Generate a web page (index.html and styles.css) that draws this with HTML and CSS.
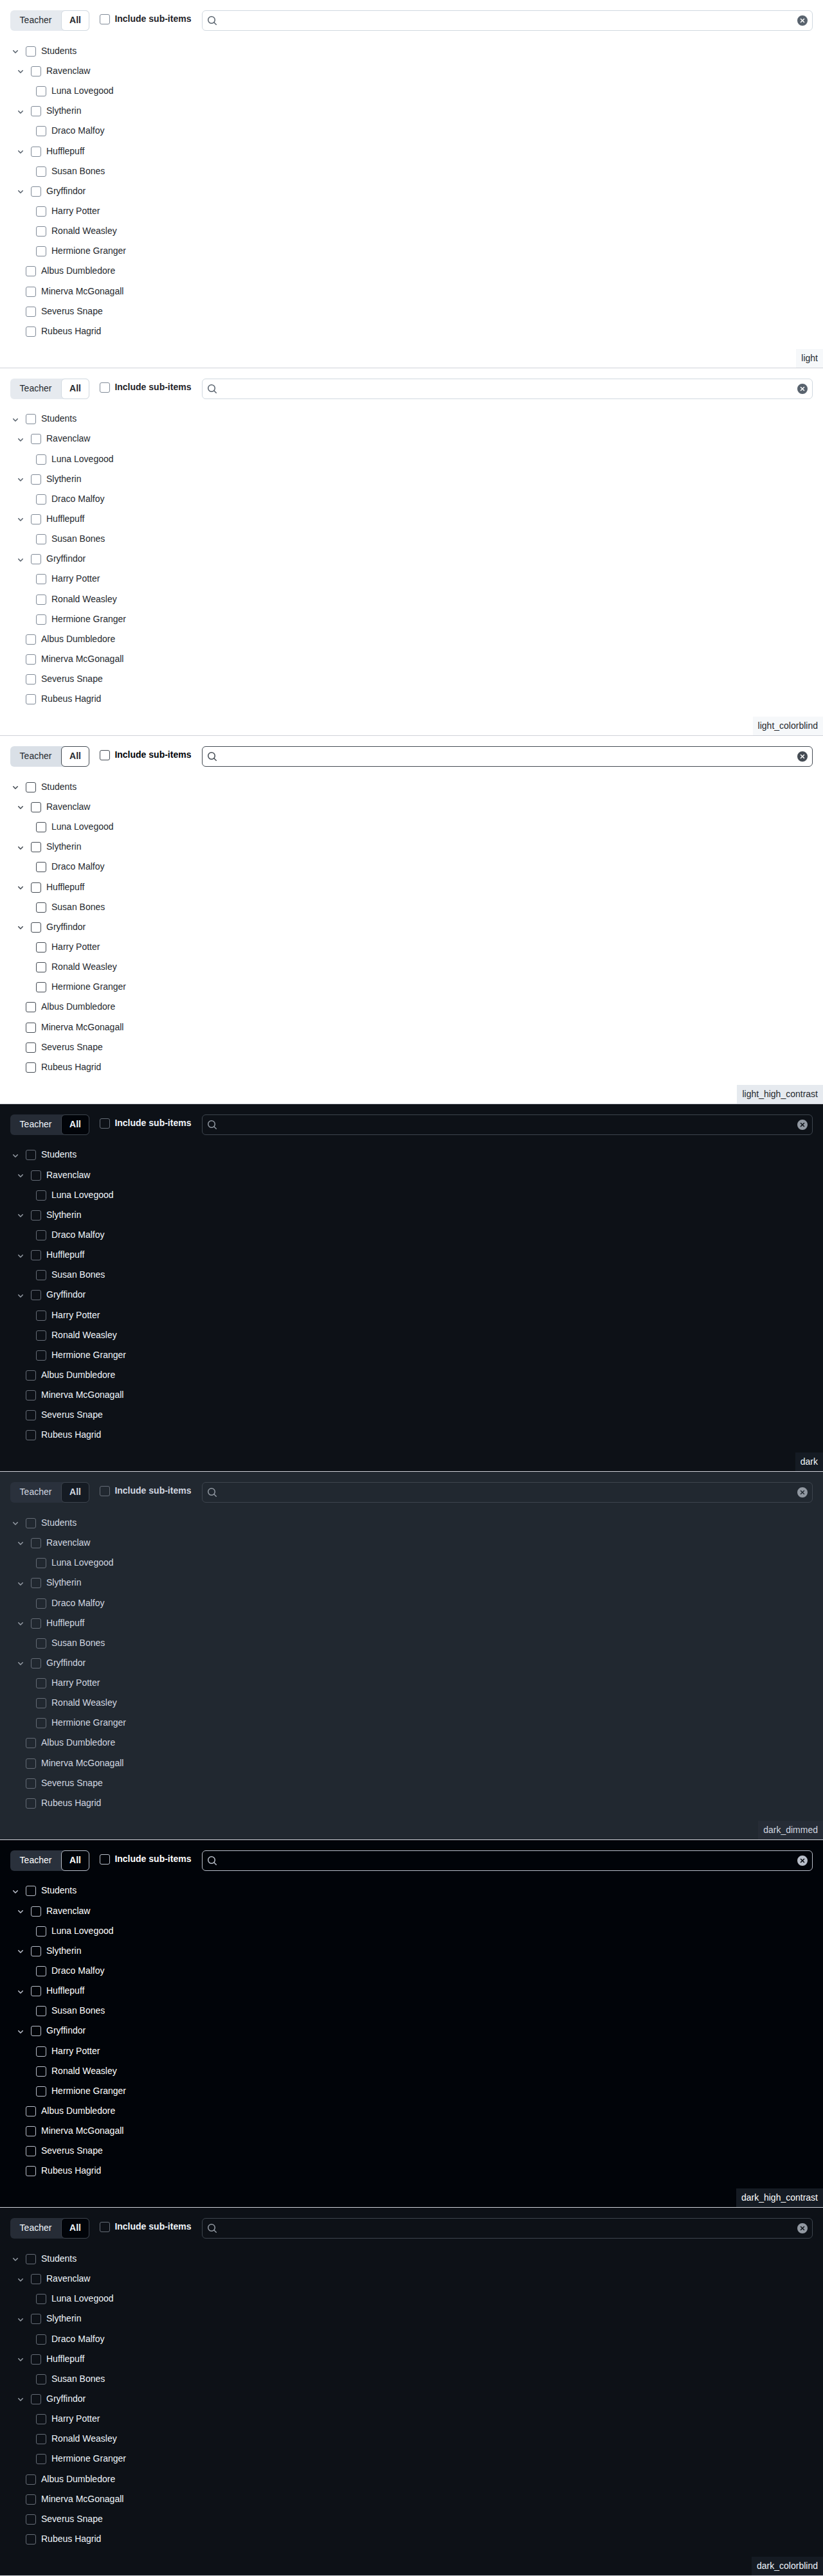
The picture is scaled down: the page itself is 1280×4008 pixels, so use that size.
FILE: index.html
```html
<!DOCTYPE html>
<html lang="en">
<head>
<meta charset="utf-8">
<title>Tree view themes</title>
<link rel="stylesheet" href="styles.css">
</head>
<body>
<main id="themes"></main>

<template id="panel">
  <section class="panel">
    <div class="toolbar">
      <div class="segmented">
        <button class="segment" type="button">Teacher</button>
        <button class="segment segment-selected" type="button">All</button>
      </div>
      <label class="include"><span class="checkbox"></span><span class="include-text">Include sub-items</span></label>
      <div class="search">
        <svg class="icon" width="16" height="16" viewBox="0 0 16 16"><path d="M10.68 11.74a6 6 0 0 1-7.922-8.982 6 6 0 0 1 8.982 7.922l3.04 3.04a.749.749 0 0 1-.326 1.275.749.749 0 0 1-.734-.215ZM11.5 7a4.499 4.499 0 1 0-8.997 0A4.499 4.499 0 0 0 11.5 7Z"/></svg>
        <svg class="icon" width="16" height="16" viewBox="0 0 16 16"><path d="M2.343 13.657A8 8 0 1 1 13.658 2.343 8 8 0 0 1 2.343 13.657ZM6.03 4.97a.751.751 0 0 0-1.042.018.751.751 0 0 0-.018 1.042L6.94 8 4.97 9.97a.749.749 0 0 0 .326 1.275.749.749 0 0 0 .734-.215L8 9.06l1.97 1.97a.749.749 0 0 0 1.275-.326.749.749 0 0 0-.215-.734L9.06 8l1.97-1.97a.749.749 0 0 0-.326-1.275.749.749 0 0 0-.734.215L8 6.94Z"/></svg>
      </div>
    </div>
    <ul class="tree"></ul>
    <span class="tag"></span>
  </section>
</template>

<template id="row">
  <li class="row">
    <span class="toggle"><svg class="icon" width="12" height="12" viewBox="0 0 12 12"><path d="M6 8.825c-.2 0-.4-.1-.5-.2l-3.3-3.3c-.3-.3-.3-.8 0-1.1.3-.3.8-.3 1.1 0l2.7 2.7 2.7-2.7c.3-.3.8-.3 1.1 0 .3.3.3.8 0 1.1l-3.2 3.2c-.2.2-.4.3-.6.3Z"/></svg></span>
    <span class="checkbox"></span>
    <span class="name"></span>
  </li>
</template>
<script src="app.js"></script>
</body>
</html>
```

FILE: app.js
```js
const themes = ["light", "light_colorblind", "light_high_contrast", "dark", "dark_dimmed", "dark_high_contrast", "dark_colorblind"];

// [name, depth, has children]
const people = [
  ["Students", 0, true],
  ["Ravenclaw", 1, true],
  ["Luna Lovegood", 2, false],
  ["Slytherin", 1, true],
  ["Draco Malfoy", 2, false],
  ["Hufflepuff", 1, true],
  ["Susan Bones", 2, false],
  ["Gryffindor", 1, true],
  ["Harry Potter", 2, false],
  ["Ronald Weasley", 2, false],
  ["Hermione Granger", 2, false],
  ["Albus Dumbledore", 0, false],
  ["Minerva McGonagall", 0, false],
  ["Severus Snape", 0, false],
  ["Rubeus Hagrid", 0, false]
];

const panelTemplate = document.getElementById("panel");
const rowTemplate = document.getElementById("row");

for (const theme of themes) {
  const panel = panelTemplate.content.cloneNode(true);
  panel.querySelector(".panel").classList.add(theme);
  panel.querySelector(".tag").textContent = theme;
  const tree = panel.querySelector(".tree");
  for (const [name, depth, open] of people) {
    const row = rowTemplate.content.cloneNode(true);
    row.querySelector(".row").classList.add("depth-" + depth);
    row.querySelector(".name").textContent = name;
    if (!open) row.querySelector(".toggle svg").remove();
    tree.append(row);
  }
  document.getElementById("themes").append(panel);
}
```

FILE: styles.css
```css
* { box-sizing: border-box; }

body {
  margin: 0;
  font: 14px/1.5 "Liberation Sans", Arial, sans-serif;
}

.panel {
  position: relative;
  height: 572.53125px;
  padding: 16px;
  border-bottom: 1px solid #d0d2d9;
  background: var(--bg);
  color: var(--fg);
}

.light, .light_colorblind {
  --bg: #fff; --fg: #25292e; --strong: #1f2328; --muted: #59636e;
  --border: #d1d9e0; --check: #818b98; --track: #e6eaef; --selected: #fff; --tag: #f6f8fa;
}
.light_high_contrast {
  --bg: #fff; --fg: #25292e; --strong: #010409; --muted: #454c54;
  --border: #454c54; --check: #454c54; --track: #dae0e7; --selected: #fff; --tag: #e6eaef;
}
.dark, .dark_colorblind {
  --bg: #0d1117; --fg: #f0f6fc; --strong: #f0f6fc; --muted: #9198a1;
  --border: #3d444d; --check: #656c76; --track: #262c36; --selected: #010409; --tag: #151b23;
}
.dark_dimmed {
  --bg: #212830; --fg: #d1d7e0; --strong: #d1d7e0; --muted: #9198a1;
  --border: #3d444d; --check: #656c76; --track: #2a313c; --selected: #151b23; --tag: #262c36;
}
.dark_high_contrast {
  --bg: #010409; --fg: #fff; --strong: #fff; --muted: #b7bdc8;
  --border: #b7bdc8; --check: #b7bdc8; --track: #2a313c; --selected: #010409; --tag: #151b23;
}

.icon { display: block; fill: var(--muted); }

.toolbar { display: flex; height: 32px; }

.segmented {
  display: flex;
  width: 123px;
  border-radius: 6px;
  background: var(--track);
}
.segment {
  width: 79px;
  padding: 0 0 0.8px;
  border: 1px solid transparent;
  background: none;
  color: var(--fg);
  font: inherit;
}
.segment-selected {
  width: 44px;
  border-color: var(--border);
  border-radius: 6px;
  background: var(--selected);
  font-weight: 700;
}

.include { display: flex; width: 159px; margin-left: 16px; padding-top: 6px; }
.include-text {
  margin: -2.8px 0 0 7.4px;
  color: var(--strong);
  font-weight: 700;
  white-space: nowrap;
}

.checkbox {
  flex: none;
  width: 16px;
  height: 16px;
  border: 1px solid var(--check);
  border-radius: 3px;
}

.search {
  display: flex;
  flex: 1;
  align-items: center;
  justify-content: space-between;
  padding: 0 7px;
  border: 1px solid var(--border);
  border-radius: 6px;
}

.tree { margin: 0; padding: 16px 0 0; list-style: none; }
.row { display: flex; height: 31.140625px; padding-top: 7.8125px; }
.depth-1 { padding-left: 8px; }
.depth-2 { padding-left: 16px; }
.toggle { width: 24px; padding: 2.4px 0 0 2px; }
.name { margin: -3px 0 0 8px; white-space: nowrap; }

.tag {
  position: absolute;
  right: 0;
  bottom: 0;
  padding: 4px 8px;
  background: var(--tag);
}
```
